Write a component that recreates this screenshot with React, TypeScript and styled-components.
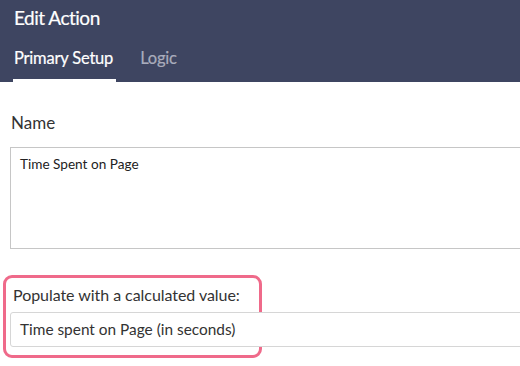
import styled, { createGlobalStyle } from "styled-components";

const GlobalStyle = createGlobalStyle`
    html, body {
        margin: 0;
        padding: 0;
        background: #ffffff;
        overflow: hidden;
    }
    body {
        font-family: Lato, "Open Sans", sans-serif;
        color: #333;
    }
`;

const Page = styled.div`
    width: 520px;
    height: 366px;
    overflow: hidden;
`;

const Header = styled.header`
    height: 82px;
    background: #3e4561;
    padding: 0 0 0 14px;
    box-sizing: border-box;
    display: flex;
    flex-direction: column;
`;

const HeaderTitle = styled.h1`
    margin: 0;
    padding-top: 6px;
    font-size: 19px;
    font-weight: 400;
    color: #ffffff;
    letter-spacing: -0.5px;
    -webkit-text-stroke: 0.2px #ffffff;
`;

const Tabs = styled.nav`
    display: flex;
    gap: 24px;
    margin-top: auto;
`;

const Tab = styled.div<{ active?: boolean }>`
    padding: 0 3px 11px 1px;
    margin-left: -1px;
    font-size: 16.5px;
    color: ${(p) => (p.active ? "#ffffff" : "#a9acbc")};
    border-bottom: 3px solid ${(p) => (p.active ? "#ffffff" : "transparent")};
    letter-spacing: -0.2px;
    -webkit-text-stroke: 0.2px ${(p) => (p.active ? "#ffffff" : "#a9acbc")};
`;

const Body = styled.main`
    padding: 30px 0 0 10px;
    display: flex;
    flex-direction: column;
`;

const Label = styled.label`
    display: block;
    font-size: 17px;
    color: #333;
    margin-bottom: 14px;
    padding-left: 1px;
`;

const NameBox = styled.div`
    width: 540px;
    height: 102px;
    box-sizing: border-box;
    border: 1px solid #c6c6c6;
    padding: 8px 9px;
    font-size: 13.6px;
    color: #222;
`;

const Highlight = styled.section`
    margin: 26px 0 0 -7px;
    width: 259px;
    height: 83px;
    box-sizing: border-box;
    border: 3px solid #ef6a8a;
    border-radius: 9px;
    padding: 7px 0 0 4px;
    overflow: visible;
`;

const FieldLabel = styled.div`
    font-size: 16px;
    color: #333;
    margin-bottom: 8px;
    padding-left: 3px;
    letter-spacing: -0.05px;
`;

const ValueInput = styled.div`
    width: 540px;
    height: 35px;
    box-sizing: border-box;
    border: 1px solid #d6d6d6;
    border-radius: 3px;
    padding: 7px 9px;
    font-size: 15.4px;
    color: #333;
    background: #fff;
`;

export default function App() {
    return (
        <Page>
            <GlobalStyle />
            <Header>
                <HeaderTitle>Edit Action</HeaderTitle>
                <Tabs>
                    <Tab active>Primary Setup</Tab>
                    <Tab>Logic</Tab>
                </Tabs>
            </Header>
            <Body>
                <Label>Name</Label>
                <NameBox>Time Spent on Page</NameBox>
                <Highlight>
                    <FieldLabel>Populate with a calculated value:</FieldLabel>
                    <ValueInput>Time spent on Page (in seconds)</ValueInput>
                </Highlight>
            </Body>
        </Page>
    );
}
